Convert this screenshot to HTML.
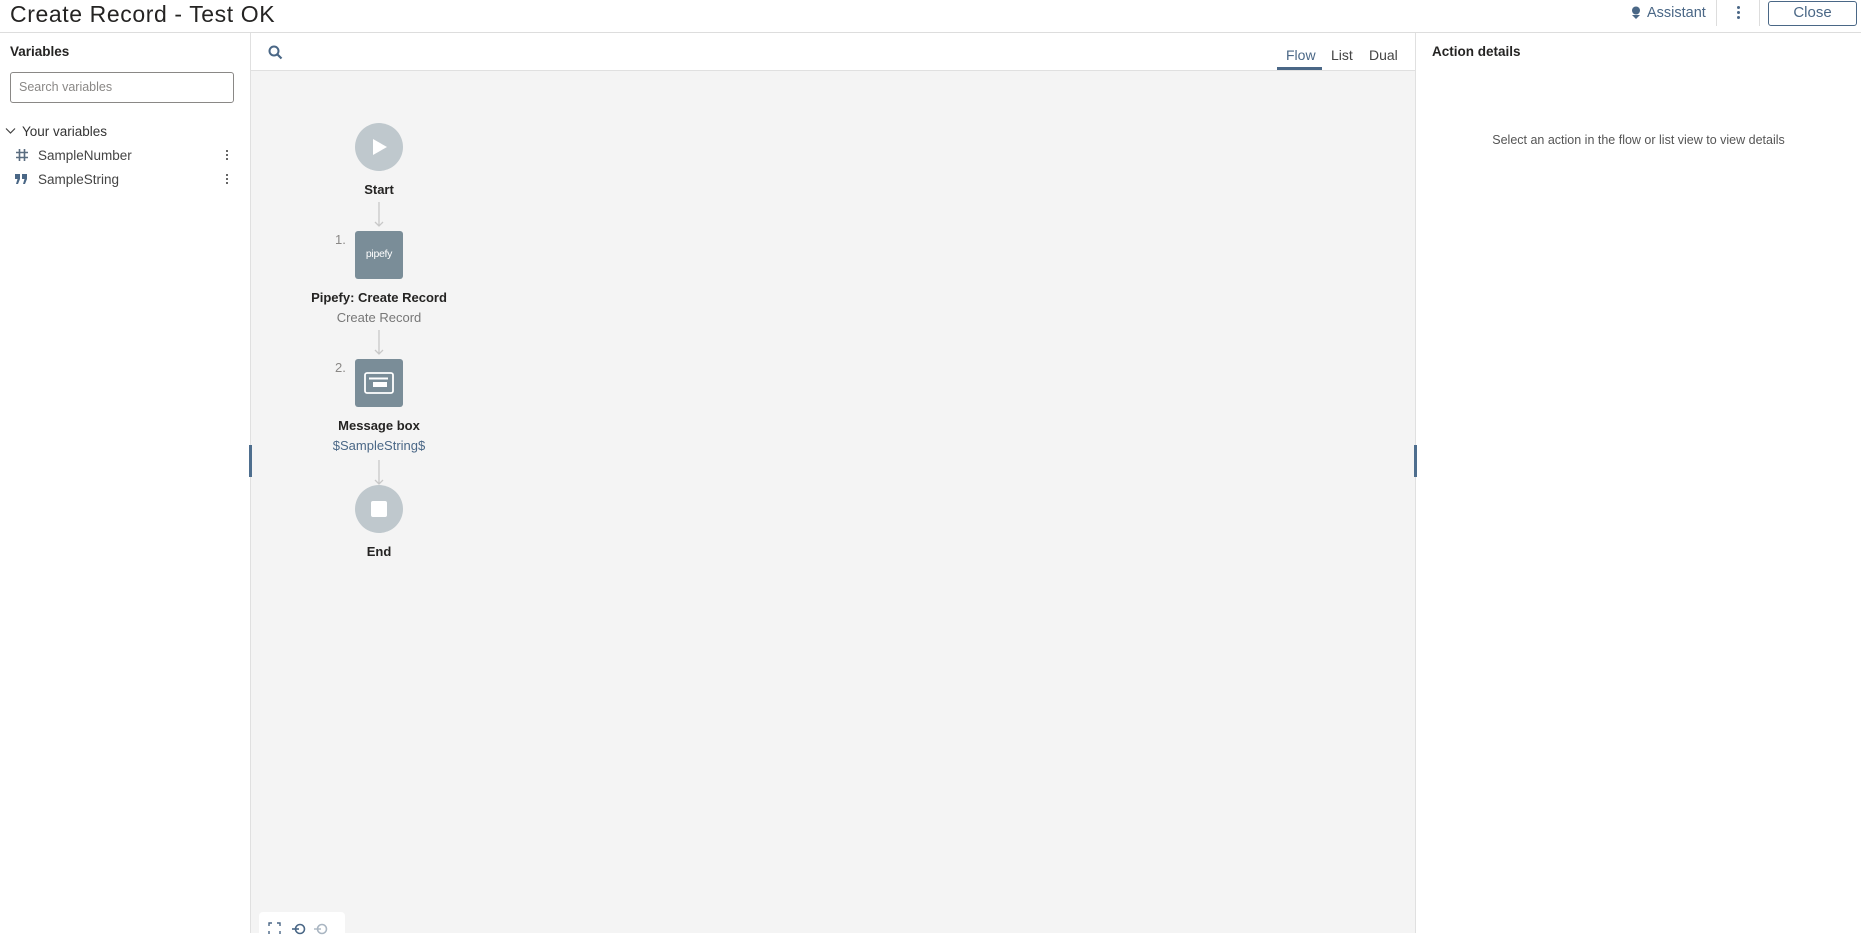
<!DOCTYPE html>
<html><head><meta charset="utf-8"><style>
*{box-sizing:border-box;margin:0;padding:0}
body{width:1861px;height:933px;overflow:hidden;background:#fff;font-family:"Liberation Sans",sans-serif;color:#252423;position:relative}
.abs{position:absolute}
.t{white-space:nowrap}
</style></head><body>
<div class="abs t" style="left:10px;top:1px;font-size:23px;color:#252423;line-height:27px;letter-spacing:0.6px">Create Record - Test OK</div>
<div class="abs" style="left:0;top:32px;width:1861px;height:1px;background:#ddd"></div>
<svg class="abs" style="left:1631px;top:6px" width="10" height="14" viewBox="0 0 10 14"><circle cx="5" cy="4.5" r="4" fill="#4a6786"/><path d="M1 9 L5 13 L9 9 Z" fill="#4a6786"/></svg>
<div class="abs t" style="left:1647px;top:5px;font-size:14.5px;color:#4a6786">Assistant</div>
<div class="abs" style="left:1716px;top:0;width:1px;height:26px;background:#ddd"></div>
<div class="abs" style="left:1737px;top:6px;width:3px;height:3px;border-radius:50%;background:#4a6786;box-shadow:0 5px 0 #4a6786,0 10px 0 #4a6786"></div>
<div class="abs" style="left:1759px;top:0;width:1px;height:26px;background:#ddd"></div>
<div class="abs" style="left:1768px;top:1px;width:89px;height:25px;border:1px solid #4a6786;border-radius:3px;font-size:15px;color:#4a6786;text-align:center;line-height:22px">Close</div>

<div class="abs" style="left:250px;top:33px;width:1px;height:900px;background:#e0e0e0"></div>
<div class="abs t" style="left:10px;top:44px;font-size:13.5px;font-weight:bold">Variables</div>
<div class="abs" style="left:10px;top:72px;width:224px;height:31px;border:1px solid #8a8886;border-radius:3px"></div>
<div class="abs t" style="left:19px;top:80px;font-size:12.5px;color:#8a8886">Search variables</div>
<svg class="abs" style="left:5px;top:127px" width="11" height="8" viewBox="0 0 11 8"><path d="M1 1.5 L5.5 6 L10 1.5" fill="none" stroke="#444" stroke-width="1.2"/></svg>
<div class="abs t" style="left:22px;top:124px;font-size:13.5px;color:#333">Your variables</div>
<svg class="abs" style="left:15px;top:148px" width="14" height="14" viewBox="0 0 14 14"><path d="M4.5 1 V13 M9.5 1 V13 M1 4.5 H13 M1 9.5 H13" stroke="#5a6d80" stroke-width="1.6"/></svg>
<div class="abs t" style="left:38px;top:148px;font-size:13.5px;color:#444">SampleNumber</div>
<svg class="abs" style="left:15px;top:174px" width="14" height="10" viewBox="0 0 14 10"><path d="M0 0 H5 V5 L3 10 H1 L2.5 5 H0 Z M7 0 H12 V5 L10 10 H8 L9.5 5 H7 Z" fill="#4a6786"/></svg>
<div class="abs t" style="left:38px;top:172px;font-size:13.5px;color:#444">SampleString</div>
<div class="abs" style="left:226px;top:150px;width:2px;height:2px;background:#666;box-shadow:0 4px 0 #666,0 8px 0 #666"></div>
<div class="abs" style="left:226px;top:174px;width:2px;height:2px;background:#666;box-shadow:0 4px 0 #666,0 8px 0 #666"></div>

<div class="abs" style="left:251px;top:70px;width:1165px;height:863px;background:#f4f4f4"></div>
<div class="abs" style="left:251px;top:70px;width:1165px;height:1px;background:#e0e0e0"></div>
<svg class="abs" style="left:268px;top:45px" width="15" height="15" viewBox="0 0 15 15"><circle cx="6" cy="6" r="4.5" fill="none" stroke="#4a6786" stroke-width="2"/><path d="M9.5 9.5 L13.5 13.5" stroke="#4a6786" stroke-width="2.2"/></svg>
<div class="abs t" style="left:1286px;top:47px;font-size:14px;color:#4a6786">Flow</div>
<div class="abs t" style="left:1331px;top:47px;font-size:14px;color:#444">List</div>
<div class="abs t" style="left:1369px;top:47px;font-size:14px;color:#444">Dual</div>
<div class="abs" style="left:1277px;top:67px;width:45px;height:3px;background:#4a6786"></div>
<div class="abs" style="left:1415px;top:33px;width:1px;height:900px;background:#e0e0e0"></div>
<div class="abs" style="left:249px;top:445px;width:3px;height:32px;background:#4e6e8e"></div>
<div class="abs" style="left:1414px;top:445px;width:3px;height:32px;background:#4e6e8e"></div>

<div class="abs" style="left:355px;top:123px;width:48px;height:48px;border-radius:50%;background:#bfc8cd"></div>
<svg class="abs" style="left:372px;top:138px" width="16" height="18" viewBox="0 0 16 18"><path d="M1 1 L15 9 L1 17 Z" fill="#fff"/></svg>
<div class="abs t" style="left:329px;top:182px;width:100px;text-align:center;font-size:13px;font-weight:bold">Start</div>
<svg class="abs" style="left:374px;top:202px" width="10" height="26"><path d="M5 0 V24 M1 20 L5 24 L9 20" stroke="#c8c8c8" stroke-width="1.3" fill="none"/></svg>

<div class="abs t" style="left:335px;top:232px;font-size:13px;color:#8a8886">1.</div>
<div class="abs" style="left:355px;top:231px;width:48px;height:48px;border-radius:3px;background:#7a8d98"></div>
<div class="abs t" style="left:355px;top:248px;width:48px;text-align:center;font-size:10.5px;color:#fff;letter-spacing:-0.3px">pipefy</div>
<div class="abs t" style="left:279px;top:290px;width:200px;text-align:center;font-size:13px;font-weight:bold">Pipefy: Create Record</div>
<div class="abs t" style="left:279px;top:310px;width:200px;text-align:center;font-size:13px;color:#777">Create Record</div>
<svg class="abs" style="left:374px;top:330px" width="10" height="26"><path d="M5 0 V24 M1 20 L5 24 L9 20" stroke="#c8c8c8" stroke-width="1.3" fill="none"/></svg>

<div class="abs t" style="left:335px;top:360px;font-size:13px;color:#8a8886">2.</div>
<div class="abs" style="left:355px;top:359px;width:48px;height:48px;border-radius:3px;background:#7a8d98"></div>
<svg class="abs" style="left:364px;top:372px" width="30" height="22" viewBox="0 0 30 22"><rect x="1" y="1" width="28" height="20" rx="2" fill="none" stroke="#fff" stroke-width="1.8"/><path d="M5 6.5 H24" stroke="#fff" stroke-width="2"/><rect x="9" y="10" width="14" height="5" fill="#fff"/></svg>
<div class="abs t" style="left:279px;top:418px;width:200px;text-align:center;font-size:13px;font-weight:bold">Message box</div>
<div class="abs t" style="left:279px;top:438px;width:200px;text-align:center;font-size:13px;color:#4a6786">$SampleString$</div>
<svg class="abs" style="left:374px;top:460px" width="10" height="26"><path d="M5 0 V24 M1 20 L5 24 L9 20" stroke="#c8c8c8" stroke-width="1.3" fill="none"/></svg>

<div class="abs" style="left:355px;top:485px;width:48px;height:48px;border-radius:50%;background:#bfc8cd"></div>
<div class="abs" style="left:371px;top:501px;width:16px;height:16px;border-radius:2px;background:#fff"></div>
<div class="abs t" style="left:329px;top:544px;width:100px;text-align:center;font-size:13px;font-weight:bold">End</div>

<div class="abs" style="left:259px;top:912px;width:86px;height:30px;background:#fff;border-radius:4px"></div>
<svg class="abs" style="left:268px;top:922px" width="70" height="14" viewBox="0 0 70 14"><path d="M1 4 V1 H4 M9 1 H12 V4 M12 9 V12 M1 9 V12" stroke="#4a6786" stroke-width="1.4" fill="none"/><circle cx="32" cy="7" r="4.5" fill="none" stroke="#4a6786" stroke-width="1.6"/><path d="M24 7 H31" stroke="#4a6786" stroke-width="1.6"/><circle cx="54" cy="7" r="4.5" fill="none" stroke="#aab6c2" stroke-width="1.6"/><path d="M46 7 H53" stroke="#aab6c2" stroke-width="1.4"/></svg>

<div class="abs t" style="left:1432px;top:44px;font-size:13.5px;font-weight:bold">Action details</div>
<div class="abs t" style="left:1416px;top:133px;width:445px;text-align:center;font-size:12.5px;color:#555">Select an action in the flow or list view to view details</div>
</body></html>
